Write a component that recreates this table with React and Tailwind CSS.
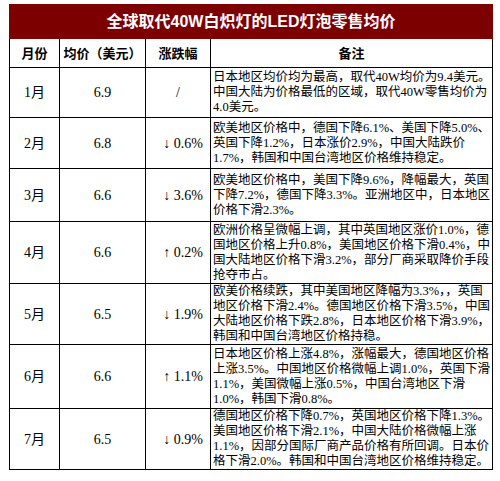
import React from "react";

const rows = [
  {
    m: "1月",
    p: "6.9",
    c: "/",
    h: "h-[50px]",
    notes: [
      "日本地区均价均为最高，取代40W均价为9.4美元。",
      "中国大陆为价格最低的区域，取代40W零售均价为",
      "4.0美元。",
    ],
  },
  {
    m: "2月",
    p: "6.8",
    c: "↓ 0.6%",
    h: "h-[51px]",
    notes: [
      "欧美地区价格中，德国下降6.1%、美国下降5.0%、",
      "英国下降1.2%，日本涨价2.9%，中国大陆跌价",
      "1.7%，韩国和中国台湾地区价格维持稳定。",
    ],
  },
  {
    m: "3月",
    p: "6.6",
    c: "↓ 3.6%",
    h: "h-[53px]",
    notes: [
      "欧美地区价格中，美国下降9.6%，降幅最大，英国",
      "下降7.2%，德国下降3.3%。亚洲地区中，日本地区",
      "价格下滑2.3%。",
    ],
  },
  {
    m: "4月",
    p: "6.6",
    c: "↑ 0.2%",
    h: "h-[62px]",
    notes: [
      "欧洲价格呈微幅上调，其中英国地区涨价1.0%，德",
      "国地区价格上升0.8%，美国地区价格下滑0.4%，中",
      "国大陆地区价格下滑3.2%，部分厂商采取降价手段",
      "抢夺市占。",
    ],
  },
  {
    m: "5月",
    p: "6.5",
    c: "↓ 1.9%",
    h: "h-[61px]",
    notes: [
      "欧美价格续跌，其中美国地区降幅为3.3%，，英国",
      "地区价格下滑2.4%。德国地区价格下滑3.5%，中国",
      "大陆地区价格下跌2.8%，日本地区价格下滑3.9%，",
      "韩国和中国台湾地区价格持稳。",
    ],
  },
  {
    m: "6月",
    p: "6.6",
    c: "↑ 1.1%",
    h: "h-[64px]",
    notes: [
      "日本地区价格上涨4.8%，涨幅最大，德国地区价格",
      "上涨3.5%。中国地区价格微幅上调1.0%，英国下滑",
      "1.1%，美国微幅上涨0.5%，中国台湾地区下滑",
      "1.0%，韩国下滑0.8%。",
    ],
  },
  {
    m: "7月",
    p: "6.5",
    c: "↓ 0.9%",
    h: "h-[61px]",
    notes: [
      "德国地区价格下降0.7%，英国地区价格下降1.3%。",
      "美国地区价格下滑2.1%，中国大陆价格微幅上涨",
      "1.1%，因部分国际厂商产品价格有所回调。日本价",
      "格下滑2.0%。韩国和中国台湾地区价格维持稳定。",
    ],
  },
];

const serif = "font-['Liberation_Serif','Noto_Sans_CJK_SC',serif]";

export default function App() {
  return (
    <div className="w-[500px] h-[481px] bg-white pt-[4px] pl-[9px] overflow-hidden">
      <table className="table-fixed border-collapse w-[483px] text-black">
        <colgroup>
          <col className="w-[50px]" />
          <col className="w-[86px]" />
          <col className="w-[65px]" />
          <col className="w-[282px]" />
        </colgroup>
        <tbody>
          <tr>
            <td
              colSpan={4}
              className="h-[34px] bg-[#7d0000] border border-[#7d0000] text-center text-white font-bold text-[16px] leading-[20px] font-['Liberation_Sans','Noto_Sans_CJK_SC',sans-serif]"
            >
              全球取代40W白炽灯的LED灯泡零售均价
            </td>
          </tr>
          <tr className="font-bold text-[13px] font-['Noto_Sans_CJK_SC',sans-serif]">
            <td className="h-[29px] border border-black text-center p-0">月份</td>
            <td className="border border-black text-center p-0 whitespace-nowrap">均价（美元）</td>
            <td className="border border-black text-center p-0">涨跌幅</td>
            <td className="border border-black text-center p-0">备注</td>
          </tr>
          {rows.map((r) => (
            <tr key={r.m} className={serif}>
              <td className={`${r.h} border border-black text-center text-[14px] p-0`}>{r.m}</td>
              <td className="border border-black text-center text-[14px] p-0">{r.p}</td>
              <td
                className={`border border-black text-[14px] p-0 whitespace-nowrap ${
                  r.c === "/" ? "text-center" : "text-right pr-[7px]"
                }`}
              >
                {r.c}
              </td>
              <td className="border border-black pl-[2px] pr-0 py-0 text-[12.5px] leading-[15px] align-middle">
                {r.notes.map((n, i) => (
                  <div key={i} className="whitespace-nowrap">
                    {n}
                  </div>
                ))}
              </td>
            </tr>
          ))}
        </tbody>
      </table>
    </div>
  );
}
